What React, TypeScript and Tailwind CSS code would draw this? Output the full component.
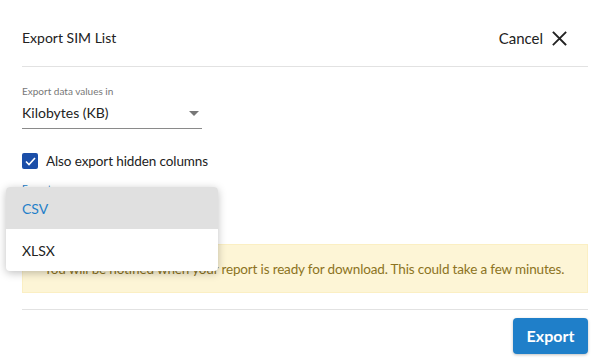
// Export SIM List dialog with the "Export as" menu opened

const FONT = "font-['Lato','Open_Sans',sans-serif]";

const FORMATS = ["CSV", "XLSX"];

function CloseIcon() {
  return (
    <svg width="15" height="15" viewBox="0 0 15 15" fill="none">
      <path d="M1.5 1.5L13.5 13.5M13.5 1.5L1.5 13.5" stroke="#222" strokeWidth="1.8" strokeLinecap="square" />
    </svg>
  );
}

function CheckBox() {
  return (
    <span className="flex h-[16px] w-[16px] items-center justify-center rounded-[2px] bg-[#1b4ea8]">
      <svg width="11" height="9" viewBox="0 0 11 9" fill="none">
        <path d="M1 4.5L4 7.5L10 1" stroke="white" strokeWidth="1.6" />
      </svg>
    </span>
  );
}

export default function App() {
  return (
    <div className={`relative h-[360px] w-[600px] overflow-hidden bg-white ${FONT}`}>
      <div className="flex h-full flex-col px-[22px] pr-[12px]">
        {/* ─── HEADER ─────────────────────────────────────────────── */}
        <div className="flex items-center justify-between border-b border-[#e2e2e2] pb-[18px] pt-[28px]">
          <span className="text-[14px] leading-[20px] text-[#222]">Export SIM List</span>
          <button className="flex items-center gap-[9px] pr-[21px] text-[15px] leading-[20px] text-[#222]">
            Cancel
            <CloseIcon />
          </button>
        </div>

        {/* ─── UNITS SELECT ───────────────────────────────────────── */}
        <div className="mt-[17px] w-[180px]">
          <div className="text-[10px] leading-[14px] text-[#777]">Export data values in</div>
          <div className="mt-[5px] flex items-center justify-between border-b border-[#8a8a8a] pb-[5px] pr-[3px]">
            <span className="text-[14px] leading-[20px] text-[#222]">Kilobytes (KB)</span>
            <span className="h-0 w-0 border-x-[5px] border-t-[5px] border-x-transparent border-t-[#777]" />
          </div>
        </div>

        {/* ─── HIDDEN COLUMNS ─────────────────────────────────────── */}
        <label className="mt-[23px] flex items-center gap-[8px]">
          <CheckBox />
          <span className="text-[13.5px] leading-[18px] tracking-[-0.1px] text-[#222]">Also export hidden columns</span>
        </label>

        {/* ─── FORMAT SELECT (menu open) ──────────────────────────── */}
        <div className="mt-[11px] w-[180px]">
          <div className="text-[10px] leading-[14px] text-[#1f7fc9]">Export as</div>
          <div className="mt-[5px] h-[34px]" />
        </div>

        {/* ─── NOTICE ─────────────────────────────────────────────── */}
        <div className="mt-[10px] flex h-[49px] items-center border border-[#fbefc3] bg-[#fdf5d6] px-[21px]">
          <span className="whitespace-nowrap text-[13.5px] leading-[18px] tracking-[-0.15px] text-[#8c7322]">
            You will be notified when your report is ready for download. This could take a few minutes.
          </span>
        </div>

        {/* ─── FOOTER ─────────────────────────────────────────────── */}
        <div className="mt-[16px] flex justify-end border-t border-[#e2e2e2] pt-[8px]">
          <button className="h-[36px] w-[75px] rounded-[4px] bg-[#1f7fc9] text-[16px] font-bold text-white shadow-[0_1px_3px_rgba(0,0,0,0.25)]">
            Export
          </button>
        </div>
      </div>

      {/* ─── OPEN MENU ────────────────────────────────────────────── */}
      <ul className="absolute left-[6px] top-[187px] w-[212px] overflow-hidden rounded-[4px] bg-white shadow-[0_2px_8px_rgba(0,0,0,0.25)]">
        {FORMATS.map((f, i) => (
          <li
            key={f}
            className={`flex h-[42px] items-center px-[16px] text-[14px] ${
              i === 0 ? "bg-[#e0e0e0] text-[#1f7fc9]" : "text-[#222]"
            }`}
          >
            {f}
          </li>
        ))}
      </ul>
    </div>
  );
}
